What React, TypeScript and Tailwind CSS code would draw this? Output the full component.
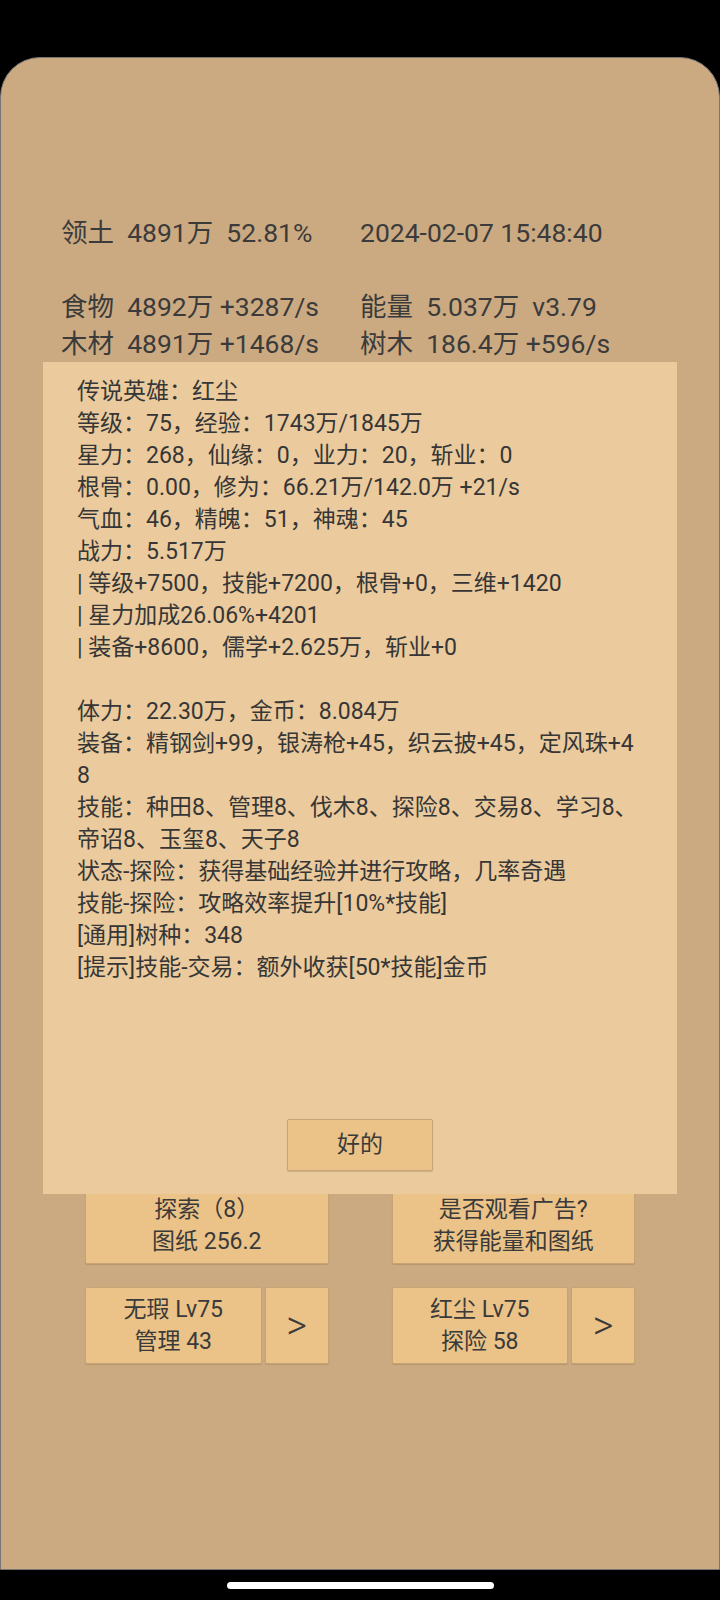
const stats = [
  ['领土  4891万  52.81%', '2024-02-07 15:48:40'],
  ['', ''],
  ['食物  4892万 +3287/s', '能量  5.037万  v3.79'],
  ['木材  4891万 +1468/s', '树木  186.4万 +596/s'],
];

const heroLines = [
  '传说英雄：红尘',
  '等级：75，经验：1743万/1845万',
  '星力：268，仙缘：0，业力：20，斩业：0',
  '根骨：0.00，修为：66.21万/142.0万 +21/s',
  '气血：46，精魄：51，神魂：45',
  '战力：5.517万',
  '| 等级+7500，技能+7200，根骨+0，三维+1420',
  '| 星力加成26.06%+4201',
  '| 装备+8600，儒学+2.625万，斩业+0',
  '',
  '体力：22.30万，金币：8.084万',
  '装备：精钢剑+99，银涛枪+45，织云披+45，定风珠+48',
  '技能：种田8、管理8、伐木8、探险8、交易8、学习8、帝诏8、玉玺8、天子8',
  '状态-探险：获得基础经验并进行攻略，几率奇遇',
  '技能-探险：攻略效率提升[10%*技能]',
  '[通用]树种：348',
  '[提示]技能-交易：额外收获[50*技能]金币',
];

const btn =
  'flex flex-col items-center justify-center rounded-[2px] border border-[#c7a473] bg-[#ebc287] text-[23px] leading-[32px] text-[#3a3a3a] shadow-[0_1px_1px_rgba(120,90,50,0.25)]';

const HeroButton = ({ name, job }: { name: string; job: string }) => (
  <div className="grid h-[77px] grid-cols-[1fr_64px] gap-[3px]">
    <div className={btn}>
      <span className="whitespace-pre">{name}</span>
      <span className="whitespace-pre">{job}</span>
    </div>
    <div className={`${btn} text-[40px] font-light`}>&gt;</div>
  </div>
);

export default function App() {
  return (
    <div className="relative h-[1600px] w-[720px] overflow-hidden bg-black font-[family-name:Roboto,'Noto_Sans_CJK_SC',sans-serif]">
      <div className="h-[57px]" />

      {/* Main card */}
      <div className="h-[1513px] rounded-t-[40px] border border-[#767676] bg-[#cbaa82]">
        {/* Resource stats */}
        <div className="grid grid-cols-[299px_1fr] pl-[60px] pt-[156px] text-[26.5px] leading-[37px] text-[#3b3b3b]">
          {stats.map(([left, right], i) => (
            <div key={i} className="contents">
              <div className="h-[37px] whitespace-pre">{left}</div>
              <div className="h-[37px] whitespace-pre">{right}</div>
            </div>
          ))}
        </div>

        {/* Action buttons */}
        <div className="mt-[825px] grid grid-cols-2 gap-x-[63px] gap-y-[23px] px-[84px]">
          <div className={`${btn} h-[77px]`}>
            <span>探索（8）</span>
            <span>图纸 256.2</span>
          </div>
          <div className={`${btn} h-[77px]`}>
            <span>是否观看广告?</span>
            <span>获得能量和图纸</span>
          </div>
          <HeroButton name="无瑕 Lv75" job="管理 43" />
          <HeroButton name="红尘 Lv75" job="探险 58" />
        </div>
      </div>

      {/* Home indicator */}
      <div className="flex justify-center pt-[12px]">
        <div className="h-[7px] w-[267px] rounded-full bg-white" />
      </div>

      {/* Hero dialog */}
      <div className="absolute left-[43px] top-[362px] flex h-[832px] w-[634px] flex-col bg-[#ebcb9d]">
        <div className="flex-1 break-all px-[34px] pt-[14px] text-[23px] leading-[32px] text-[#363636]">
          {heroLines.map((line, i) => (
            <div key={i} className="min-h-[32px]">
              {line}
            </div>
          ))}
        </div>
        <div className="flex justify-center pb-[23px]">
          <div className={`${btn} h-[52px] w-[146px]`}>好的</div>
        </div>
      </div>
    </div>
  );
}
